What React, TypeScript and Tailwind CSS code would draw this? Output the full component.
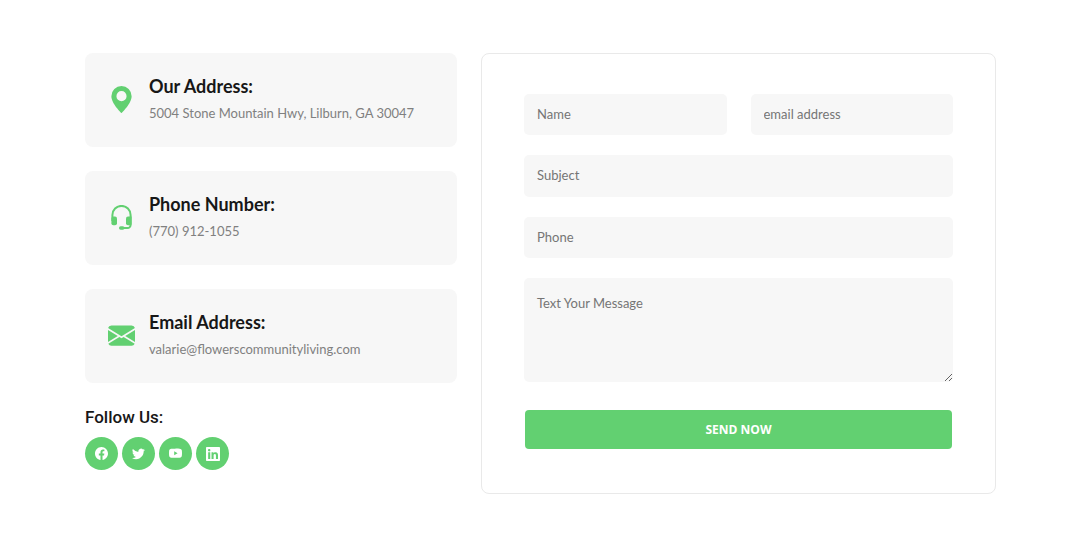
import type { ReactNode } from "react";
import { BsEnvelopeFill, BsFacebook, BsGeoAltFill, BsTwitter, BsYoutube } from "react-icons/bs";
import { FaLinkedin } from "react-icons/fa";

function HeadsetIcon() {
  return (
    <svg width="27" height="26" viewBox="0 0 27 26" fill="none" aria-hidden="true">
      <path
        d="M4.4 16V10a9.1 9.1 0 0 1 18.2 0V20a3 3 0 0 1-3 3H14"
        stroke="currentColor"
        strokeWidth="2"
      />
      <rect x="3.4" y="11.5" width="5.6" height="8.8" rx="2" fill="currentColor" />
      <path d="M18 13.5a2 2 0 0 1 2-2h3.6v7.3a1.5 1.5 0 0 1-1.5 1.5H20a2 2 0 0 1-2-2z" fill="currentColor" />
      <rect x="11" y="21.2" width="5.5" height="3.5" rx="1.7" fill="currentColor" />
    </svg>
  );
}

const contacts = [
  {
    title: "Our Address:",
    text: "5004 Stone Mountain Hwy, Lilburn, GA 30047",
    icon: <BsGeoAltFill size={27} />,
  },
  { title: "Phone Number:", text: "(770) 912-1055", icon: <HeadsetIcon /> },
  {
    title: "Email Address:",
    text: "valarie@flowerscommunityliving.com",
    icon: <BsEnvelopeFill size={27} />,
  },
];

const socials = [
  { label: "Facebook", icon: <BsFacebook size={13} /> },
  { label: "Twitter", icon: <BsTwitter size={13} /> },
  { label: "YouTube", icon: <BsYoutube size={13} /> },
  { label: "LinkedIn", icon: <FaLinkedin size={16} /> },
];

const field =
  "w-full rounded-[5px] bg-[#f7f7f7] px-[13px] text-[13px] text-[#757575] placeholder:text-[#757575] outline-none focus:ring-1 focus:ring-[#62d071]";

function ContactCard({ title, text, icon }: { title: string; text: string; icon: ReactNode }) {
  return (
    <section className="flex min-h-[94px] items-center gap-[14px] rounded-lg bg-[#f7f7f7] px-[23px]">
      <span className="shrink-0 pb-px text-[#62d071]">{icon}</span>
      <div className="pb-0.5">
        <h2 className="text-[18px] leading-7 font-bold text-[#171717]">{title}</h2>
        <p className="text-[13px] leading-[26px] text-[#808080]">{text}</p>
      </div>
    </section>
  );
}

export default function App() {
  return (
    <main className="grid grid-cols-[372fr_515fr] items-start gap-6 bg-white pt-[53px] pr-[76px] pb-[57px] pl-[85px] font-['Lato',sans-serif]">
      <div>
        <div className="flex flex-col gap-6">
          {contacts.map((c) => (
            <ContactCard key={c.title} {...c} />
          ))}
        </div>
        <h2 className="mt-[21px] font-['Roboto',sans-serif] text-[17px] leading-[26px] font-medium text-[#171717]">
          Follow Us:
        </h2>
        <div className="mt-[7px] flex gap-1">
          {socials.map((s) => (
            <a
              key={s.label}
              href="#"
              aria-label={s.label}
              className="flex size-[33px] items-center justify-center rounded-full bg-[#62d071] text-white"
            >
              {s.icon}
            </a>
          ))}
        </div>
      </div>

      <form className="rounded-lg border border-[#e9e9e9] px-[42px] pt-10 pb-11" onSubmit={(e) => e.preventDefault()}>
        <div className="flex flex-col gap-5">
          <div className="grid grid-cols-2 gap-6">
            <input className={`${field} h-[41px] pb-0.5`} type="text" placeholder="Name" aria-label="Name" />
            <input
              className={`${field} h-[41px] pb-0.5`}
              type="email"
              placeholder="email address"
              aria-label="email address"
            />
          </div>
          <input className={`${field} h-[42px] pb-0.5`} type="text" placeholder="Subject" aria-label="Subject" />
          <input className={`${field} h-[41px] pb-0.5`} type="tel" placeholder="Phone" aria-label="Phone" />
          <textarea
            className={`${field} block h-[104px] resize py-4 leading-[18px]`}
            placeholder="Text Your Message"
            aria-label="Text Your Message"
          />
        </div>
        <div className="mt-7 px-px">
          <button
            type="submit"
            className="h-[39px] w-full rounded bg-[#62d071] font-['Open_Sans',sans-serif] text-[12px] font-bold text-white"
          >
            SEND NOW
          </button>
        </div>
      </form>
    </main>
  );
}
